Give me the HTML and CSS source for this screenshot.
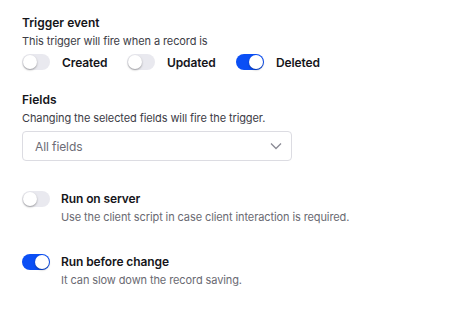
FILE: index.html
```html
<!DOCTYPE html>
<html lang="en">
<head>
  <meta charset="UTF-8">
  <title>Trigger settings</title>
  <link rel="stylesheet" href="styles.css">
</head>
<body>
  <div class="panel">
    <!-- Trigger event -->
    <section class="group">
      <h3 class="group-title">Trigger event</h3>
      <p class="group-desc">This trigger will fire when a record is</p>
      <div class="event-row">
        <label class="switch-item">
          <span class="switch"><span class="knob"></span></span>
          <span class="switch-text">Created</span>
        </label>
        <label class="switch-item">
          <span class="switch"><span class="knob"></span></span>
          <span class="switch-text">Updated</span>
        </label>
        <label class="switch-item">
          <span class="switch on"><span class="knob"></span></span>
          <span class="switch-text">Deleted</span>
        </label>
      </div>
    </section>

    <!-- Fields -->
    <section class="group fields">
      <h3 class="group-title">Fields</h3>
      <p class="group-desc">Changing the selected fields will fire the trigger.</p>
      <div class="select">
        <span class="select-value">All fields</span>
        <svg class="chevron" width="12" height="8" viewBox="0 0 12 8">
          <path d="M1 1.5 L6 6.5 L11 1.5" fill="none" stroke="#8a8a94" stroke-width="1.3"/>
        </svg>
      </div>
    </section>

    <!-- Options -->
    <div class="option">
      <span class="switch"><span class="knob"></span></span>
      <div class="option-body">
        <div class="option-title">Run on server</div>
        <div class="option-desc">Use the client script in case client interaction is required.</div>
      </div>
    </div>

    <div class="option">
      <span class="switch on"><span class="knob"></span></span>
      <div class="option-body">
        <div class="option-title">Run before change</div>
        <div class="option-desc">It can slow down the record saving.</div>
      </div>
    </div>
  </div>
</body>
</html>
```

FILE: styles.css
```css
/* General */
body {
  margin: 0;
  background-color: #ffffff;
  font-family: Inter, "Noto Sans", sans-serif;
  color: #15151a;
}

.panel {
  padding: 14px 22px;
}

.group-title {
  margin: 0;
  font-size: 12px;
  font-weight: 600;
  line-height: 18px;
}

.group-desc {
  margin: 1px 0 0;
  font-size: 11px;
  line-height: 16px;
  letter-spacing: -0.1px;
  color: #3c3c46;
}

/* Switch */
.event-row {
  display: flex;
  margin-top: 5px;
}

.switch-item {
  display: flex;
  align-items: center;
  gap: 12px;
  height: 16px;
  width: 105px;
}

.switch-item:nth-child(2) {
  width: 109px;
}

.switch-item:last-child {
  width: auto;
}

.switch-text {
  font-size: 12px;
  font-weight: 600;
  letter-spacing: -0.1px;
}

.switch {
  position: relative;
  flex: none;
  width: 28px;
  height: 16px;
  border-radius: 8px;
  background-color: #e9e9ef;
}

.switch .knob {
  position: absolute;
  top: 1px;
  left: 1px;
  width: 14px;
  height: 14px;
  border-radius: 50%;
  background-color: #ffffff;
  box-shadow: 0 1px 2px rgba(0, 0, 0, 0.35);
}

.switch.on {
  background-color: #0b4ff5;
}

.switch.on .knob {
  left: 13px;
}

/* Fields */
.fields {
  margin-top: 21px;
}

.select {
  display: flex;
  align-items: center;
  justify-content: space-between;
  box-sizing: border-box;
  width: 270px;
  height: 30px;
  margin-top: 5px;
  padding: 0 9px 0 12px;
  border: 1px solid #dcdce2;
  border-radius: 4px;
}

.select-value {
  font-size: 12px;
  letter-spacing: -0.1px;
  color: #6c6c76;
}

/* Options */
.option {
  display: flex;
  gap: 11px;
  margin-top: 29px;
}

.option + .option {
  margin-top: 28px;
}

.option .switch {
  margin-top: 1px;
}

.option-title {
  font-size: 12px;
  font-weight: 600;
  line-height: 18px;
  letter-spacing: -0.1px;
}

.option-desc {
  margin-top: 1px;
  font-size: 11px;
  line-height: 16px;
  letter-spacing: -0.1px;
  color: #6a6a72;
}
```
